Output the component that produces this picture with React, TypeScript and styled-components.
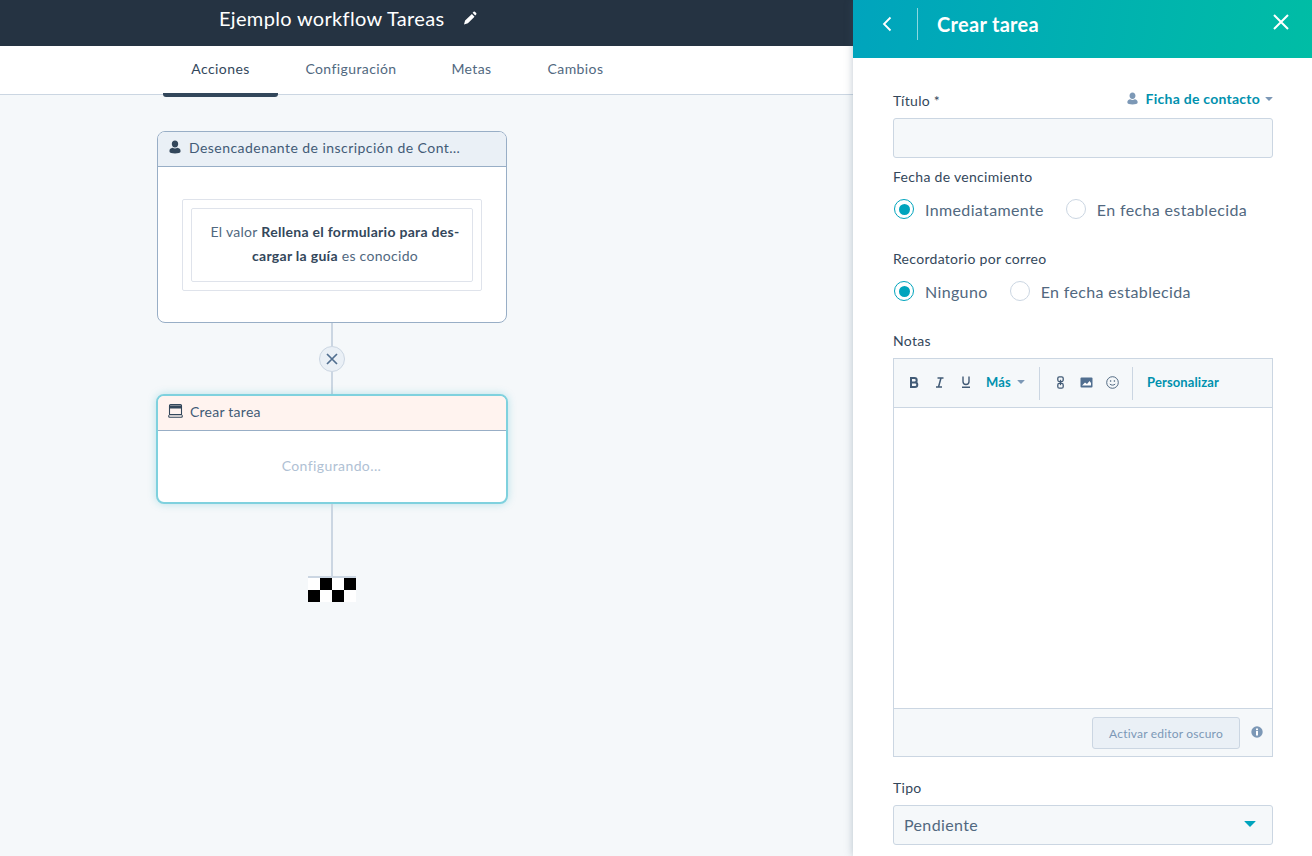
import React from "react";
import styled, { createGlobalStyle } from "styled-components";

const Global = createGlobalStyle`
  html, body { margin: 0; padding: 0; height: 100%; overflow: hidden; background: #f5f8fa; }
  body { font-family: Lato, "Open Sans", "Liberation Sans", sans-serif; color: #33475b; }
  * { box-sizing: border-box; }
`;
const Page = styled.div`display: flex; width: 1312px; height: 856px; overflow: hidden;`;
const Main = styled.main`width: 853px; flex: none; display: flex; flex-direction: column;`;
const TopBar = styled.header`height: 46px; background: #253342; display: flex; align-items: center; padding: 0 0 11px 219px; gap: 19px;`;
const WorkflowTitle = styled.h1`margin: 0; font-size: 20px; font-weight: 400; color: #fff; letter-spacing: .33px;`;
const TabBar = styled.nav`height: 49px; background: #fff; border-bottom: 1px solid #cbd6e2; display: flex; padding-left: 163px;`;
const Tab = styled.div<{ $active?: boolean; $w: number }>`
  width: ${p => p.$w}px; height: ${p => p.$active ? "51px" : "auto"}; padding-top: 14px; text-align: center; font-size: 14px; letter-spacing: .4px;
  color: ${p => p.$active ? "#33475b" : "#516880"};
  border-bottom: ${p => p.$active ? "4px solid #33475b" : "0"};
  border-radius: 0 0 3px 3px;
`;
const Canvas = styled.section`flex: 1; padding: 36px 0 0 157px; display: flex; flex-direction: column; align-items: flex-start;`;
const Card = styled.article<{ $active?: boolean }>`
  width: ${p => p.$active ? 352 : 350}px; margin-left: ${p => p.$active ? -1 : 0}px; background: #fff; border-radius: 8px; overflow: hidden;
  border: ${p => p.$active ? "2px solid #7fd1de" : "1px solid #98aec6"};
  box-shadow: ${p => p.$active ? "0 0 8px rgba(0,164,189,.25)" : "none"};
`;
const CardHead = styled.div<{ $tint: string; $ls: number }>`
  height: 35px; background: ${p => p.$tint}; border-bottom: 1px solid #98aec6;
  display: flex; align-items: center; gap: 7px; padding: 0 0 4px 10px; font-size: 14px; color: #425b76; letter-spacing: ${p => p.$ls}px;
`;
const TriggerBody = styled.div`height: 155px; padding: 32px 24px 0;`;
const OuterBox = styled.div`height: 92px; border: 1px solid #dfe3eb; border-radius: 2px; padding: 8px;`;
const InnerBox = styled.div`height: 74px; border: 1px solid #dfe3eb; border-radius: 2px; text-align: center; padding: 11px 2px 0 8px; font-size: 14px; line-height: 24px; color: #516880; letter-spacing: .29px;
  strong { color: #33475b; font-weight: 700; }
`;
const Connector = styled.div<{ $h: number }>`width: 2px; height: ${p => p.$h}px; background: #cbd6e2; margin-left: 174px;`;
const RemoveButton = styled.div`width: 26px; height: 26px; margin-left: 162px; border-radius: 50%; background: #eaf0f6; border: 1px solid #cbd6e2; display: flex; align-items: center; justify-content: center;`;
const Configuring = styled.div`height: 71px; display: flex; align-items: center; justify-content: center; font-size: 14px; color: #b0c1d4; letter-spacing: .4px; padding: 0 1px 3px 0;`;
const Flag = styled.svg`display: block; margin-left: 151px;`;

const Panel = styled.aside`width: 459px; flex: none; height: 856px; background: #fff; box-shadow: 0 0 8px rgba(66,91,118,.35); position: relative;`;
const PanelHead = styled.header`height: 58px; background: linear-gradient(100deg, #00a4bd, #00bda5); display: flex; align-items: center; padding: 0 0 10px 29px; color: #fff;`;
const PanelDivider = styled.div`width: 1px; height: 32px; background: rgba(255,255,255,.55); margin: 0 19px 0 25px;`;
const PanelTitle = styled.h2`margin: 0; font-size: 20px; font-weight: 700; letter-spacing: .3px; flex: 1;`;
const CloseBtn = styled.div`margin: -4px 23px 0 0; display: flex;`;
const Form = styled.form`padding: 0 39px 0 40px;`;
const LabelRow = styled.div`display: flex; justify-content: space-between; align-items: center; height: 20px; margin-top: 33px;`;
const FieldLabel = styled.label<{ $top: number }>`display: block; font-size: 14px; line-height: 20px; color: #33475b; letter-spacing: .3px; margin-top: ${p => p.$top}px;`;
const Owner = styled.div`display: flex; align-items: center; font-size: 14px; font-weight: 700; color: #0091ae; letter-spacing: .25px; gap: 7px; margin-top: -6px;`;
const Caret = styled.span<{ $c: string; $s: number }>`display: inline-block; border-left: ${p => p.$s}px solid transparent; border-right: ${p => p.$s}px solid transparent; border-top: ${p => p.$s}px solid ${p => p.$c}; border-radius: 1px;`;
const OwnerCaret = styled(Caret)`margin-left: -2px; margin-top: 1px;`;
const TextBox = styled.div`height: 40px; margin-top: 7px; background: #f5f8fa; border: 1px solid #cbd6e2; border-radius: 3px;`;
const RadioRow = styled.div`display: flex; align-items: center; height: 24px; margin-top: 10px; padding-left: 1px; gap: 22px;`;
const RadioItem = styled.div`display: flex; align-items: center; gap: 11px; font-size: 16px; color: #516880; letter-spacing: .36px;`;
const Radio = styled.span<{ $on?: boolean }>`
  width: 20px; height: 20px; border-radius: 50%; background: #fff; position: relative; display: block;
  border: ${p => p.$on ? "1.5px solid #00a4bd" : "1.5px solid #cbd6e2"};
  &::after { content: ""; display: ${p => p.$on ? "block" : "none"}; position: absolute; inset: 3.5px; border-radius: 50%; background: #00a4bd; }
`;
const Editor = styled.div`height: 399px; margin-top: 7px; border: 1px solid #cbd6e2; display: flex; flex-direction: column;`;
const Toolbar = styled.div`height: 49px; flex: none; background: #f5f8fa; border-bottom: 1px solid #cbd6e2; display: flex; align-items: center; padding: 0 0 2px 14px;`;
const ToolIcon = styled.span`width: 26px; height: 24px; display: flex; align-items: center; justify-content: center; flex: none; margin-left: -7px; margin-right: 7px;`;
const MoreBtn = styled.span`display: flex; align-items: center; gap: 6px; font-size: 13px; font-weight: 700; color: #0091ae; letter-spacing: .2px;`;
const ToolSep = styled.span<{ $ml: number; $mr: number }>`width: 1px; height: 33px; margin-top: 2px; background: #cbd6e2; margin-right: ${p => p.$mr}px; margin-left: ${p => p.$ml}px; flex: none;`;
const Personalize = styled.span`font-size: 13px; font-weight: 700; color: #0091ae; letter-spacing: .12px;`;
const EditorBody = styled.div`flex: 1; background: #fff;`;
const EditorFoot = styled.div`height: 48px; flex: none; background: #f5f8fa; border-top: 1px solid #cbd6e2; display: flex; align-items: center; justify-content: flex-end; padding: 0 9px 1px 0; gap: 11px;`;
const DarkBtn = styled.div`width: 148px; height: 32px; margin-top: 2px; background: #eaf0f6; border: 1px solid #cbd6e2; border-radius: 3px; display: flex; align-items: center; justify-content: center; font-size: 12px; color: #7c98b6; letter-spacing: .2px;`;
const Select = styled.div`height: 40px; margin-top: 7px; background: #f5f8fa; border: 1px solid #cbd6e2; border-radius: 3px; display: flex; align-items: center; justify-content: space-between; padding: 0 16px 2px 10px; font-size: 16px; color: #516880; letter-spacing: .36px;`;

const Person = ({ c, s = 14 }: { c: string; s?: number }) => (
  <svg width={s} height={s} viewBox="0 0 14 14" aria-hidden><path fill={c} d="M7 .6c2 0 3.2 1.5 3.2 3.4S9 7.6 7 7.6 3.8 5.900 3.800 4 5 .6 7 .6zM4.600 7.700c.7.500 1.500.8 2.400.8s1.700-.3 2.400-.8c1.900.4 3.100 1.300 3.100 2.900v1.100c0 1-2.600 1.700-5.500 1.700s-5.500-.7-5.500-1.700v-1.100c0-1.600 1.200-2.500 3.100-2.900z" /></svg>
);
const TaskIcon = () => (
  <svg width="15" height="14" viewBox="0 0 15 14" aria-hidden fill="none"><path d="M1.500 1.600a1 1 0 0 1 1-1h10a1 1 0 0 1 1 1v9h-12z" stroke="#33475b" strokeWidth="1.100" /><path d="M1.500 1.400h12v3h-12z" fill="#33475b" /><path d="M.7 11.200v1a1 1 0 0 0 1 1h11.600a1 1 0 0 0 1-1v-1" stroke="#33475b" strokeWidth="1.100" /></svg>
);
const Pencil = () => (
  <svg width="14" height="14" viewBox="0 0 14 14" aria-hidden><path fill="#fff" d="M10.600.8a1 1 0 0 1 1.300 0l1.300 1.300a1 1 0 0 1 0 1.300l-1 1-2.600-2.600zM8.900 3.100l2.600 2.600-6.600 6.600L1 13.400l1.100-3.800z" /></svg>
);
const Info = () => (
  <svg width="12" height="12" viewBox="0 0 12 12" aria-hidden><circle cx="6" cy="6" r="5.700" fill="#7c98b6" /><rect x="5" y="5" width="2" height="4.500" fill="#fff" /><rect x="5" y="2.500" width="2" height="1.700" fill="#fff" /></svg>
);

export default function App() {
  return (
    <Page>
      <Global />
      <Main>
        <TopBar><WorkflowTitle>Ejemplo workflow Tareas</WorkflowTitle><Pencil /></TopBar>
        <TabBar>
          <Tab $active $w={115}>Acciones</Tab>
          <Tab $w={146}>Configuración</Tab>
          <Tab $w={95}>Metas</Tab>
          <Tab $w={113}>Cambios</Tab>
        </TabBar>
        <Canvas>
          <Card>
            <CardHead $tint="#eaf0f6" $ls={.45}><Person c="#33475b" />Desencadenante de inscripción de Cont…</CardHead>
            <TriggerBody>
              <OuterBox>
                <InnerBox>El valor <strong>Rellena el formulario para des-<br />cargar la guía</strong> es conocido</InnerBox>
              </OuterBox>
            </TriggerBody>
          </Card>
          <Connector $h={23} />
          <RemoveButton>
            <svg width="12" height="12" viewBox="0 0 12 12" aria-hidden><path d="M1 1l10 10M11 1L1 11" stroke="#516f90" strokeWidth="1.700" /></svg>
          </RemoveButton>
          <Connector $h={22} />
          <Card $active>
            <CardHead $tint="#fff3ef" $ls={.25}><TaskIcon />Crear tarea</CardHead>
            <Configuring>Configurando...</Configuring>
          </Card>
          <Connector $h={72} />
          <Flag width="48" height="26" viewBox="0 0 48 26" aria-hidden>
            <rect width="48" height="26" fill="#fff" />
            <rect width="48" height="2" fill="#cbd6e2" />
            <path d="M12 2h12v12H12zM36 2h12v12H36zM0 14h12v12H0zM24 14h12v12H24z" fill="#000" />
          </Flag>
        </Canvas>
      </Main>
      <Panel>
        <PanelHead>
          <svg width="10" height="16" viewBox="0 0 10 16" aria-hidden fill="none"><path d="M8.500 1.500L2 8l6.500 6.500" stroke="#fff" strokeWidth="1.800" /></svg>
          <PanelDivider />
          <PanelTitle>Crear tarea</PanelTitle>
          <CloseBtn>
            <svg width="16" height="16" viewBox="0 0 16 16" aria-hidden fill="none"><path d="M1 1l14 14M15 1L1 15" stroke="#fff" strokeWidth="2" /></svg>
          </CloseBtn>
        </PanelHead>
        <Form>
          <LabelRow>
            <FieldLabel $top={0}>Título *</FieldLabel>
            <Owner>
              <Person c="#7c98b6" s={13} />
              <span>Ficha de contacto</span>
              <OwnerCaret $c="#7c98b6" $s={4.500} />
            </Owner>
          </LabelRow>
          <TextBox />
          <FieldLabel $top={9}>Fecha de vencimiento</FieldLabel>
          <RadioRow>
            <RadioItem><Radio $on />Inmediatamente</RadioItem>
            <RadioItem><Radio />En fecha establecida</RadioItem>
          </RadioRow>
          <FieldLabel $top={28}>Recordatorio por correo</FieldLabel>
          <RadioRow>
            <RadioItem><Radio $on />Ninguno</RadioItem>
            <RadioItem><Radio />En fecha establecida</RadioItem>
          </RadioRow>
          <FieldLabel $top={28}>Notas</FieldLabel>
          <Editor>
            <Toolbar>
              <ToolIcon><svg width="10" height="11" viewBox="0 0 10 11" aria-hidden fill="none"><path d="M2 1h3.500a2.200 2.200 0 0 1 0 4.400H2zM2 5.400h4a2.300 2.300 0 0 1 0 4.600H2z" stroke="#425b76" strokeWidth="2" /></svg></ToolIcon>
              <ToolIcon><svg width="10" height="11" viewBox="0 0 10 11" aria-hidden fill="none"><path d="M2.500 1h6M1 10h6M6 1L3.500 10" stroke="#425b76" strokeWidth="1.500" /></svg></ToolIcon>
              <ToolIcon><svg width="10" height="12" viewBox="0 0 10 12" aria-hidden fill="none"><path d="M2 .5v5a3 3 0 0 0 6 0v-5M1 11.200h8" stroke="#425b76" strokeWidth="1.400" /></svg></ToolIcon>
              <MoreBtn>Más <Caret $c="#7c98b6" $s={4} /></MoreBtn>
              <ToolSep $ml={14} $mr={14} />
              <ToolIcon><svg width="7" height="13" viewBox="0 0 7 13" aria-hidden fill="none"><rect x=".8" y=".8" width="5.400" height="4.800" rx="1.500" stroke="#425b76" strokeWidth="1.300" /><rect x=".8" y="7.400" width="5.400" height="4.800" rx="1.500" stroke="#425b76" strokeWidth="1.300" /><path d="M3.500 3.800v5.400" stroke="#425b76" strokeWidth="1.300" /></svg></ToolIcon>
              <ToolIcon><svg width="13" height="11" viewBox="0 0 13 11" aria-hidden><rect x=".5" y=".5" width="12" height="10" rx="1" fill="#516f90" /><path d="M2 8.500l3-3 2 1.500 2.500-3L11 6v2.500z" fill="#fff" /></svg></ToolIcon>
              <ToolIcon><svg width="13" height="13" viewBox="0 0 13 13" aria-hidden fill="none"><circle cx="6.500" cy="6.500" r="5.800" stroke="#425b76" strokeWidth=".9" /><circle cx="4.600" cy="5" r=".8" fill="#425b76" /><circle cx="8.400" cy="5" r=".8" fill="#425b76" /><path d="M3.800 8c1.200 1.500 4.200 1.500 5.400 0" stroke="#425b76" strokeWidth=".9" /></svg></ToolIcon>
              <ToolSep $ml={0} $mr={14} />
              <Personalize>Personalizar</Personalize>
            </Toolbar>
            <EditorBody />
            <EditorFoot>
              <DarkBtn>Activar editor oscuro</DarkBtn>
              <Info />
            </EditorFoot>
          </Editor>
          <FieldLabel $top={21}>Tipo</FieldLabel>
          <Select>Pendiente<Caret $c="#00a4bd" $s={6} /></Select>
        </Form>
      </Panel>
    </Page>
  );
}
